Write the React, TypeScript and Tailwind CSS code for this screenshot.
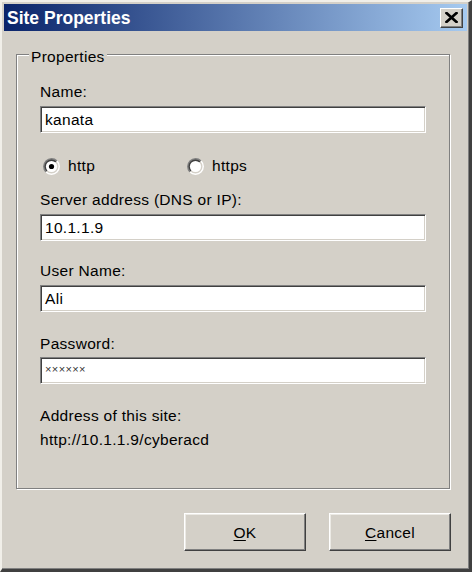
import React from "react";

function Radio({ checked }: { checked?: boolean }) {
  return (
    <svg width="17" height="17" viewBox="0 0 17 17" className="shrink-0">
      <path d="M2.49 14.51 A8.5 8.5 0 0 1 14.51 2.49 Z" fill="#808080" />
      <path d="M2.49 14.51 A8.5 8.5 0 0 0 14.51 2.49 Z" fill="#ffffff" />
      <path d="M3.55 13.45 A7 7 0 0 1 13.45 3.55 Z" fill="#404040" />
      <path d="M3.55 13.45 A7 7 0 0 0 13.45 3.55 Z" fill="#d4d0c8" />
      <circle cx="8.5" cy="8.5" r="5.6" fill="#ffffff" />
      {checked && <circle cx="8.5" cy="8.5" r="2.6" fill="#000000" />}
    </svg>
  );
}

function Field({ value, small }: { value: string; small?: boolean }) {
  return (
    <div className="h-[27px] w-full flex items-center bg-white border border-t-[#808080] border-l-[#808080] border-b-white border-r-white shadow-[inset_1px_1px_0_#404040,inset_-1px_-1px_0_#d4d0c8] pl-[4px] pt-[1px]">
      {small ? (
        <span className="text-[11px] leading-[18px] tracking-[0.4px] text-[#333] -mt-[4px]">××××××</span>
      ) : (
        <span className="leading-[18px]">{value}</span>
      )}
    </div>
  );
}

function Button({ children }: { children: React.ReactNode }) {
  return (
    <div className="w-[122px] h-[38px] flex items-center justify-center border border-t-white border-l-white border-b-[#404040] border-r-[#404040] shadow-[inset_-1px_-1px_0_#808080,inset_1px_1px_0_#eceae5] leading-[18px] pt-[1px]">
      {children}
    </div>
  );
}

export default function App() {
  return (
    <div className="w-[472px] h-[572px] bg-[#d4d0c8] font-['Liberation_Sans',Arial,sans-serif] text-[15.5px] leading-[18px] tracking-[0.3px] text-black border-t-2 border-l-2 border-t-[#f1efe9] border-l-[#f1efe9] border-r-[3px] border-b-[3px] border-r-[#404040] border-b-[#404040] shadow-[inset_-1px_-1px_0_#808080] p-[2px] flex flex-col">
      {/* Title bar */}
      <div className="h-[27px] shrink-0 flex items-center justify-between pl-[3px] pr-[4px] bg-[linear-gradient(to_right,#0a246a,#a6caf0)]">
        <span className="text-white font-bold text-[17.5px] leading-[20px] tracking-normal">Site Properties</span>
        <div className="w-[23px] h-[20px] flex items-center justify-center bg-[#d4d0c8] border border-t-white border-l-white border-b-[#404040] border-r-[#404040] shadow-[inset_-1px_-1px_0_#808080]">
          <svg width="13" height="11" viewBox="0 0 13 11">
            <path d="M1.5 1 L11.5 10 M11.5 1 L1.5 10" stroke="#000" strokeWidth="2.6" strokeLinecap="square" />
          </svg>
        </div>
      </div>

      {/* Group box */}
      <div className="relative mt-[23px] ml-[12px] w-[434px] h-[435px] border border-[#808080] shadow-[inset_1px_1px_0_#ffffff,1px_1px_0_#ffffff] px-[23px] pt-[28px] flex flex-col">
        <span className="absolute left-[12px] -top-[7px] px-[2px] bg-[#d4d0c8]">Properties</span>

        <div>Name:</div>
        <div className="mt-[5px]">
          <Field value="kanata" />
        </div>

        <div className="mt-[24px] h-[18px] flex items-center">
          <div className="w-[147px] flex items-center pl-[3px] gap-[8px]">
            <Radio checked />
            <span>http</span>
          </div>
          <div className="flex items-center gap-[8px]">
            <Radio />
            <span>https</span>
          </div>
        </div>

        <div className="mt-[16px]">Server address (DNS or IP):</div>
        <div className="mt-[5px]">
          <Field value="10.1.1.9" />
        </div>

        <div className="mt-[21px]">User Name:</div>
        <div className="mt-[5px]">
          <Field value="Ali" />
        </div>

        <div className="mt-[23px]">Password:</div>
        <div className="mt-[4px]">
          <Field value="" small />
        </div>

        <div className="mt-[23px]">Address of this site:</div>
        <div className="mt-[5.5px]">http://10.1.1.9/cyberacd</div>
      </div>

      {/* Buttons */}
      <div className="mt-[24px] mr-[16px] flex justify-end gap-[23px]">
        <Button>
          <span>
            <span className="underline underline-offset-2">O</span>K
          </span>
        </Button>
        <Button>
          <span>
            <span className="underline underline-offset-2">C</span>ancel
          </span>
        </Button>
      </div>
    </div>
  );
}
